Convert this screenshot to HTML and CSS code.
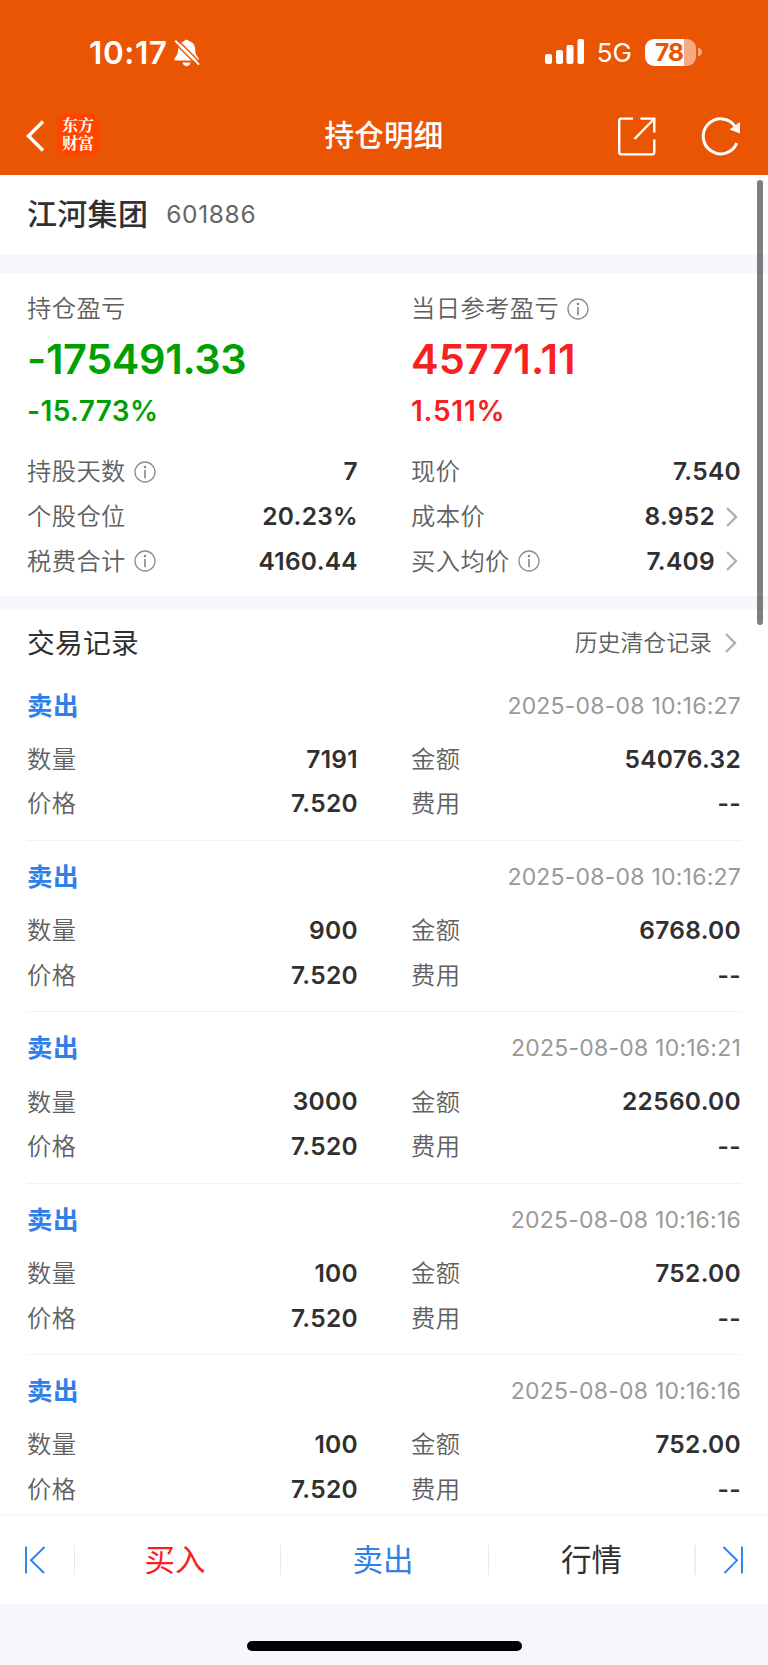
FILE: index.html
```
<!DOCTYPE html>
<html lang="zh-CN">
<head>
<meta charset="utf-8">
<title>持仓明细</title>
<link rel="stylesheet" href="styles.css">
</head>
<body>
<svg class="defs" width="0" height="0">
  <symbol id="info" viewBox="0 0 22 22"><circle cx="11" cy="11" r="10" fill="none" stroke="#8c8c8c" stroke-width="1.3"/><circle cx="11" cy="6.1" r="1.3" fill="#8c8c8c"/><path d="M11 9v8.3" stroke="#8c8c8c" stroke-width="1.7"/></symbol>
  <symbol id="chev" viewBox="0 0 12 20"><path d="M1 1l9 9-9 9" fill="none" stroke="#b0b0b0" stroke-width="2.4"/></symbol>
</svg>
<div class="phone">
  <header class="header">
    <div class="status">
      <div class="status-left">
        <span class="time">10:17</span>
        <svg class="bell" width="26" height="28" viewBox="0 0 26 28"><path d="M4.5 8.5 C5.5 4.5 8 2.3 10.3 1.9 C10.8 .3 14.2 .3 14.7 1.9 C18.800 2.700 21 6 21.200 10 C21.300 14.500 22 16 24.200 18.600 C25.200 20 25 21.600 23.500 21.600 H2 C.3 21.600 0 20 1 18.700 C3.300 16 3.900 14.500 4 11Z M8.600 23.600 H16.600 C16 28.300 9.200 28.300 8.600 23.600Z" fill="#fff"/><path d="M3.300.500 L27.500 24.700" stroke="#ea5504" stroke-width="1.500"/><path d="M1.200 1.800 L25 25.600" stroke="#fff" stroke-width="2"/><path d="M-1 2.200 L22.500 25.700" stroke="#ea5504" stroke-width="1.500"/></svg>
      </div>
      <div class="status-right">
        <svg class="signal" width="39" height="26" viewBox="0 0 39 26" fill="#fff"><rect x="0" y="15" width="7" height="10" rx="2"/><rect x="11" y="11" width="7" height="14" rx="2"/><rect x="21.500" y="6" width="7" height="19" rx="2"/><rect x="32.500" y="0" width="6.500" height="25" rx="2"/></svg>
        <span class="network">5G</span>
        <span class="battery"><span class="level">78</span></span><svg class="nub" width="4" height="10" viewBox="0 0 4 10"><path d="M0 .500Q4 2 4 5T0 9.500Z" fill="#f4aa82"/></svg>
      </div>
    </div>
    <nav class="nav">
      <div class="nav-side">
        <svg class="back" width="18" height="32" viewBox="0 0 18 32"><path d="M17 1.500L2.500 16L17 30.500" fill="none" stroke="#fff" stroke-width="3.500"/></svg>
        <span class="logo">东方<br>财富</span>
      </div>
      <h1 class="title">持仓明细</h1>
      <div class="nav-side nav-end">
        <svg width="38" height="39" viewBox="0 0 38 39" fill="none" stroke="#fff" stroke-width="2.400"><path d="M15 1.600H3.500Q1.200 1.600 1.200 4V35Q1.200 37.400 3.500 37.400H34Q36.300 37.400 36.300 35V22.500"/><path d="M22.500 1.600H36.300V15.500M36 2L16.500 22"/></svg>
        <svg width="40" height="40" viewBox="0 0 40 40"><path d="M35.800 27.200A17.500 17.500 0 1 1 34.200 10.500" fill="none" stroke="#fff" stroke-width="3"/><path d="M39 6v11.500l-10.500-4z" fill="#fff"/></svg>
      </div>
    </nav>
  </header>

  <section class="stock"><span class="stock-name">江河集团</span><span class="stock-code">601886</span></section>

  <section class="summary">
    <div class="col green"><div class="label top">持仓盈亏</div><div class="big">-175491.33</div><div class="pct">-15.773%</div></div>
    <div class="col red"><div class="label top">当日参考盈亏<svg class="info"><use href="#info"/></svg></div><div class="big">45771.11</div><div class="pct">1.511%</div></div>
    <div class="row"><span class="label">持股天数<svg class="info"><use href="#info"/></svg></span><b>7</b></div>
    <div class="row"><span class="label">现价</span><b>7.540</b></div>
    <div class="row"><span class="label">个股仓位</span><b>20.23%</b></div>
    <div class="row"><span class="label">成本价</span><b>8.952<svg class="chev"><use href="#chev"/></svg></b></div>
    <div class="row"><span class="label">税费合计<svg class="info"><use href="#info"/></svg></span><b>4160.44</b></div>
    <div class="row"><span class="label">买入均价<svg class="info"><use href="#info"/></svg></span><b>7.409<svg class="chev"><use href="#chev"/></svg></b></div>
  </section>

  <main class="trades">
    <div class="trades-head"><h2>交易记录</h2><a class="history">历史清仓记录<svg class="chev"><use href="#chev"/></svg></a></div>
    <article class="record">
      <div class="record-head"><strong>卖出</strong><time>2025-08-08 10:16:27</time></div>
      <div class="row"><span class="label">数量</span><b>7191</b></div><div class="row"><span class="label">金额</span><b>54076.32</b></div>
      <div class="row"><span class="label">价格</span><b>7.520</b></div><div class="row"><span class="label">费用</span><b>--</b></div>
    </article>
    <article class="record">
      <div class="record-head"><strong>卖出</strong><time>2025-08-08 10:16:27</time></div>
      <div class="row"><span class="label">数量</span><b>900</b></div><div class="row"><span class="label">金额</span><b>6768.00</b></div>
      <div class="row"><span class="label">价格</span><b>7.520</b></div><div class="row"><span class="label">费用</span><b>--</b></div>
    </article>
    <article class="record">
      <div class="record-head"><strong>卖出</strong><time>2025-08-08 10:16:21</time></div>
      <div class="row"><span class="label">数量</span><b>3000</b></div><div class="row"><span class="label">金额</span><b>22560.00</b></div>
      <div class="row"><span class="label">价格</span><b>7.520</b></div><div class="row"><span class="label">费用</span><b>--</b></div>
    </article>
    <article class="record">
      <div class="record-head"><strong>卖出</strong><time>2025-08-08 10:16:16</time></div>
      <div class="row"><span class="label">数量</span><b>100</b></div><div class="row"><span class="label">金额</span><b>752.00</b></div>
      <div class="row"><span class="label">价格</span><b>7.520</b></div><div class="row"><span class="label">费用</span><b>--</b></div>
    </article>
    <article class="record">
      <div class="record-head"><strong>卖出</strong><time>2025-08-08 10:16:16</time></div>
      <div class="row"><span class="label">数量</span><b>100</b></div><div class="row"><span class="label">金额</span><b>752.00</b></div>
      <div class="row"><span class="label">价格</span><b>7.520</b></div><div class="row"><span class="label">费用</span><b>--</b></div>
    </article>
  </main>

  <footer class="actions">
    <span class="edge"><svg width="22" height="28" viewBox="0 0 22 28" fill="none" stroke="#2f80e8" stroke-width="1.900"><path d="M2 .500V27.500M20.500 1L7 14.300L20 27"/></svg></span>
    <span class="action buy">买入</span>
    <span class="action sell">卖出</span>
    <span class="action quote">行情</span>
    <span class="edge last"><svg width="22" height="28" viewBox="0 0 22 28" fill="none" stroke="#2f80e8" stroke-width="1.900"><path d="M20 .500V27.500M1.500 1L15 14.300L2.500 27"/></svg></span>
  </footer>
  <div class="home"><span class="home-bar"></span></div>
  <div class="scrollbar"></div>
</div>
</body>
</html>
```
FILE: styles.css
```
* { box-sizing: border-box; }
body { margin: 0; background: #fff; color: #303030; font-family: Inter, "Noto Sans CJK SC", sans-serif; line-height: 1.2; }
h1, h2 { margin: 0; font-weight: 400; }
.defs { position: absolute; }
.phone { position: relative; width: 768px; height: 1665px; display: flex; flex-direction: column; overflow: hidden; }
svg { flex: none; }

.header { height: 174.5px; flex: none; background: #ea5504; color: #fff; }
.status { height: 104px; display: flex; justify-content: space-between; padding: 0 66px 0 89px; }
.status-left, .status-right { display: flex; align-items: center; }
.time { padding-top: 2px; font-size: 31.500px; font-weight: 600; letter-spacing: 0.6px; }
.bell { margin: 1px 0 0 6px; }
.network { padding-top: 2px; font-size: 26px; margin-left: 13px; }
.battery { width: 51px; height: 27px; margin: 0 2px 0 13px; border-radius: 9px; background: linear-gradient(to right, #fff 39px, #f4aa82 39px); }
.level { display: block; padding-left: 10px; font-size: 24.500px; line-height: 27px; font-weight: 700; letter-spacing: -1px; color: #ea5504; }
.nav { height: 64px; display: flex; align-items: center; justify-content: space-between; padding: 0 27px 0 26px; }
.nav-side { width: 180px; display: flex; align-items: center; }
.nav-end { justify-content: flex-end; gap: 45px; }
.logo { width: 42px; height: 42px; margin: -2px 0 0 13px; padding-top: 2px; border-radius: 9px; background: #ff4500; text-align: center; font: 700 16px/18px "Noto Serif CJK SC", "Noto Sans CJK SC", serif; }
.title { font-size: 29.500px; font-weight: 500; letter-spacing: 0.3px; padding-left: 1px; }

.stock { height: 98.500px; flex: none; border-bottom: 18px solid #f6f7fa; padding: 0 27px 1px; display: flex; align-items: center; }
.stock-name { font-size: 30px; font-weight: 500; letter-spacing: 0.3px; }
.stock-code { font-size: 24.500px; margin-left: 18px; letter-spacing: 0.65px; color: #666; }

.summary { height: 336.500px; flex: none; border-bottom: 14.500px solid #f6f7fa; padding: 17.500px 28px 0 27px; display: grid; grid-template-columns: 330px 329px; grid-template-rows: 159px repeat(3, 44.800px); column-gap: 54px; align-content: start; }
.label { display: flex; align-items: center; font-size: 24.300px; font-weight: 350; letter-spacing: 0.400px; color: #606060; }
.top { height: 37px; }
.big { font-size: 41.500px; line-height: 62px; font-weight: 600; }
.pct { font-size: 28px; line-height: 42px; font-weight: 600; letter-spacing: 0.4px; }
.green { color: #00a000; }
.green .big { letter-spacing: -0.4px; }
.red { color: #f82020; }
.red .pct { letter-spacing: 0.75px; }
.info { width: 22px; height: 22px; margin-left: 8px; }
.chev { width: 12px; height: 20px; margin: 0 3px 0 11px; }
.row { height: 44.700px; display: flex; align-items: center; justify-content: space-between; }
.row b { margin-right: -1px; font-size: 24.500px; font-weight: 600; letter-spacing: 0.3px; display: flex; align-items: center; }

.trades { flex: 1; min-height: 0; overflow: hidden; padding: 0 27px; }
.trades-head { height: 60px; padding: 8px 1px 0 0; display: flex; align-items: center; justify-content: space-between; }
.trades-head h2 { font-size: 27.700px; letter-spacing: 0.3px; }
.history { display: flex; align-items: center; font-size: 22.900px; font-weight: 350; color: #606060; }
.history .chev { margin-left: 13px; }
.record { height: 171.400px; border-bottom: 1px solid #f3f3f3; padding: 14px 1px 0 0; display: grid; grid-template-columns: 330px 329px; grid-template-rows: 53.500px 44.700px 44.700px; column-gap: 54px; align-content: start; }
.record-head { grid-column: 1 / -1; height: 45px; display: flex; align-items: center; justify-content: space-between; }
.record-head strong { font-size: 25.500px; font-weight: 700; letter-spacing: 0.5px; color: #2f80e8; }
.record-head time { margin-right: -1px; padding-top: 1px; font-size: 23px; letter-spacing: 0.22px; color: #999; }

.actions { height: 90px; flex: none; border-top: 2px solid #f8f8f9; display: flex; align-items: center; background: #fff; }
.edge { width: 74px; display: flex; padding-left: 24px; }
.edge.last { flex: 1; height: 30px; align-items: center; padding-left: 26px; border-left: 2px solid #eee; }
.action { width: 206px; height: 30px; display: flex; align-items: center; justify-content: center; border-left: 1px solid #e8e8e8; font-size: 30.500px; }
.buy { color: #f82020; padding-right: 5px; }
.sell { width: 208px; color: #2f80e8; padding-right: 3px; }
.home { height: 61px; flex: none; background: #f6f7fa; display: flex; justify-content: center; padding-top: 37px; }
.home-bar { width: 275px; height: 10px; border-radius: 5px; background: #000; }
.scrollbar { position: absolute; top: 180px; left: 757px; width: 6px; height: 445px; border-radius: 3px; background: rgba(0, 0, 0, 0.5); }
```
